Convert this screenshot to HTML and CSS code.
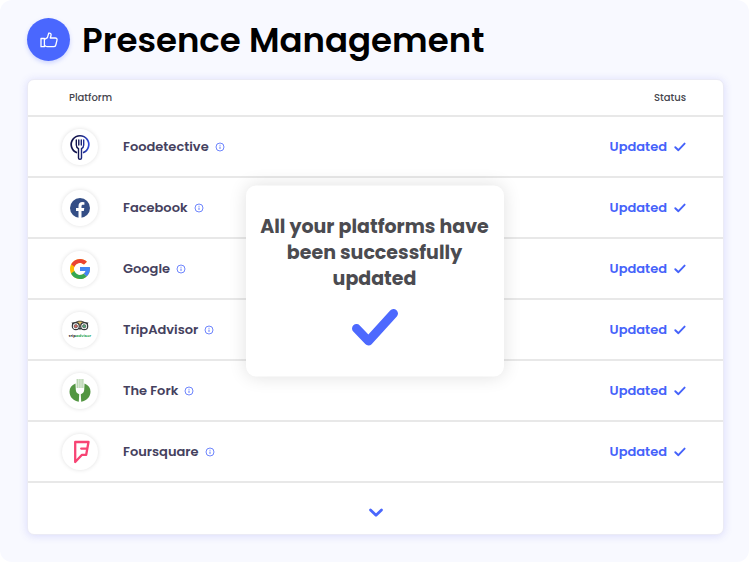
FILE: index.html
```html
<!DOCTYPE html>
<html lang="en">
<head>
<meta charset="utf-8">
<meta name="viewport" content="width=device-width, initial-scale=1">
<title>Presence Management</title>
<link rel="stylesheet" href="styles.css">
</head>
<body>
<svg class="defs" aria-hidden="true">
  <symbol id="info" viewBox="0 0 10 10"><circle cx="5" cy="5" r="4" fill="none" stroke="currentColor" stroke-width=".8"/><path d="M5 4.600v2.300M5 2.800v.9" fill="none" stroke="currentColor" stroke-width=".9"/></symbol>
  <symbol id="check" viewBox="0 0 46 38"><path d="M4.500 20 16.500 32.500 41.500 5" fill="none" stroke="currentColor" stroke-width="9" stroke-linecap="round" stroke-linejoin="round"/></symbol>
  <symbol id="tick" viewBox="0 0 12 10"><path d="M1.300 5.200 4.400 8.200 10.600 1.600" fill="none" stroke="currentColor" stroke-width="1.900" stroke-linecap="round" stroke-linejoin="round"/></symbol>
</svg>
<main class="page">
  <header class="heading">
    <span class="heading-icon">
      <svg width="20" height="20" viewBox="0 0 20 20" fill="none" stroke="currentColor" stroke-width="1.300" stroke-linejoin="round" aria-hidden="true"><path d="M2 8.500h3.400v8.200H2zM5.400 9.500 8.400 7.600 9.700 3.200c1.900-.5 2.700.9 2.300 2.300L11.300 8h4.900c1.500 0 2.100 1 1.800 2.200l-1.200 4.800c-.3 1.100-1.100 1.700-2.200 1.700H8.200c-1.500 0-1.900-1-2.800-1.200"/></svg>
    </span>
    <h1>Presence Management</h1>
  </header>
  <section class="card">
    <table>
      <thead><tr><th scope="col" class="platform-head">Platform</th><th scope="col" class="status-head">Status</th></tr></thead>
      <tbody>
        <tr>
          <td><div class="platform"><span class="logo"><svg width="24" height="28" viewBox="0 0 24 28" aria-hidden="true"><defs><linearGradient id="navy" gradientUnits="userSpaceOnUse" x1="2" x2="22" y1="0" y2="0"><stop offset=".4" stop-color="#11134d"/><stop offset="1" stop-color="#3450e8"/></linearGradient></defs><path d="M9 19.800A8.800 8.800 0 1 1 15 19.800" fill="none" stroke="url(#navy)" stroke-width="1.700"/><path d="M8.300 7v5c0 2 1 3 2.200 3.600V25c0 1.600 3 1.600 3 0v-9.400c1.200-.6 2.200-1.600 2.200-3.600V7M10.800 7v5M13.300 7v5" fill="none" stroke="url(#navy)" stroke-width="1.400" stroke-linecap="round"/></svg></span><span>Foodetective</span><button type="button" class="info" aria-label="About Foodetective"><svg width="10" height="10"><use href="#info"/></svg></button></div></td>
          <td><div class="status">Updated<svg width="12" height="10"><use href="#tick"/></svg></div></td>
        </tr>
        <tr>
          <td><div class="platform"><span class="logo"><svg width="20" height="20" viewBox="0 0 20 20" aria-hidden="true"><circle cx="10" cy="10" r="10" fill="#344e86"/><path d="M8.500 20v-7H6v-3h2.500V7.900c0-2.600 1.500-3.900 3.800-3.900l2.100.2v2.500h-1.300c-1.200 0-1.600.7-1.600 1.500V10h2.800l-.5 3h-2.300v7z" fill="#fff"/></svg></span><span>Facebook</span><button type="button" class="info" aria-label="About Facebook"><svg width="10" height="10"><use href="#info"/></svg></button></div></td>
          <td><div class="status">Updated<svg width="12" height="10"><use href="#tick"/></svg></div></td>
        </tr>
        <tr>
          <td><div class="platform"><span class="logo"><svg width="20" height="20" viewBox="4 4 40 40" aria-hidden="true"><path fill="#fbbc05" d="M43.600 20H24v8h11.300C33.700 32.700 29.200 36 24 36c-6.600 0-12-5.400-12-12s5.400-12 12-12c3.100 0 5.800 1.200 8 3l5.700-5.700C34 6.100 29.300 4 24 4 13 4 4 13 4 24s9 20 20 20 20-9 20-20c0-1.300-.1-2.700-.4-4z"/><path fill="#ea4335" d="m6.300 14.700 6.600 4.800C14.700 15.100 19 12 24 12c3.100 0 5.800 1.200 8 3l5.700-5.700C34 6.100 29.300 4 24 4 16.300 4 9.700 8.300 6.300 14.700z"/><path fill="#34a853" d="M24 44c5.200 0 9.900-2 13.400-5.200l-6.200-5.200C29.200 35.100 26.700 36 24 36c-5.200 0-9.600-3.300-11.300-7.900l-6.500 5C9.500 39.600 16.200 44 24 44z"/><path fill="#4285f4" d="M43.600 20H24v8h11.300a12 12 0 0 1-4.100 5.600l6.200 5.200C37 39.200 44 34 44 24c0-1.300-.1-2.700-.4-4z"/></svg></span><span>Google</span><button type="button" class="info" aria-label="About Google"><svg width="10" height="10"><use href="#info"/></svg></button></div></td>
          <td><div class="status">Updated<svg width="12" height="10"><use href="#tick"/></svg></div></td>
        </tr>
        <tr>
          <td><div class="platform"><span class="logo"><svg width="28" height="20" viewBox="-1 0 28 20" aria-hidden="true"><path d="M4.500 2.500h3C11 .3 15 .3 18.500 2.500h3l-1.300 2.300H5.800z" fill="#34383a"/><path d="M9.300 2.200C11.500 1.300 14.500 1.300 16.700 2.200L13 6z" fill="#e7c568"/><circle cx="8.800" cy="6.200" r="3.500" fill="#fff" stroke="#34383a" stroke-width="1.200"/><circle cx="17.200" cy="6.200" r="3.500" fill="#fff" stroke="#34383a" stroke-width="1.200"/><circle cx="8.800" cy="6.200" r="1.700" fill="#d66a62" stroke="#555" stroke-width=".7"/><circle cx="17.200" cy="6.200" r="1.700" fill="#55a878" stroke="#555" stroke-width=".7"/><path d="m11.500 8 1.500 2.300L14.500 8z" fill="#34383a"/><text x="13" y="16.500" text-anchor="middle" class="owl-word"><tspan fill="#222">trip</tspan><tspan fill="#2aa653">advisor</tspan></text></svg></span><span>TripAdvisor</span><button type="button" class="info" aria-label="About TripAdvisor"><svg width="10" height="10"><use href="#info"/></svg></button></div></td>
          <td><div class="status">Updated<svg width="12" height="10"><use href="#tick"/></svg></div></td>
        </tr>
        <tr>
          <td><div class="platform"><span class="logo"><svg width="22" height="26" viewBox="0 0 22 26" aria-hidden="true"><path d="M6.500 5.500C2.500 7 .5 10 .5 13.800c0 5 3.800 9.200 9.300 9.900l.4-7.500c-2-.7-3.200-2-3.400-4.200zM15.500 5.500c4 1.500 6 4.500 6 8.300 0 5-3.800 9.200-9.300 9.900l-.4-7.500c2-.7 3.200-2 3.400-4.200z" fill="#539642"/><path d="M8.200 1v9M10.100 1v9M12 1v9M13.900 1v9" stroke="#8fbd82" stroke-width=".9"/></svg></span><span>The Fork</span><button type="button" class="info" aria-label="About The Fork"><svg width="10" height="10"><use href="#info"/></svg></button></div></td>
          <td><div class="status">Updated<svg width="12" height="10"><use href="#tick"/></svg></div></td>
        </tr>
        <tr>
          <td><div class="platform"><span class="logo"><svg width="20" height="24" viewBox="0 0 20 24" aria-hidden="true"><path d="M5.200 2h13.300L16.200 14.800h-4.200L5.200 22zM16.800 8.600h-5.600" fill="none" stroke="#f74474" stroke-width="2.300" stroke-linejoin="round" stroke-linecap="round"/></svg></span><span>Foursquare</span><button type="button" class="info" aria-label="About Foursquare"><svg width="10" height="10"><use href="#info"/></svg></button></div></td>
          <td><div class="status">Updated<svg width="12" height="10"><use href="#tick"/></svg></div></td>
        </tr>
      </tbody>
    </table>
    <button type="button" class="more" aria-label="Show more platforms"><svg width="16" height="10" viewBox="0 0 16 10" fill="none" stroke="currentColor" stroke-width="2.800" stroke-linecap="round" stroke-linejoin="round"><path d="m2.500 2 5.500 5.200L13.500 2"/></svg></button>
  </section>
  <div class="notice" role="dialog" aria-labelledby="notice-text">
    <p id="notice-text">All your platforms have been successfully updated</p>
    <svg width="46" height="38" aria-hidden="true"><use href="#check"/></svg>
  </div>
</main>
</body>
</html>
```

FILE: styles.css
```css
* { box-sizing: border-box; }

body {
  margin: 0;
  background: #fff;
  font-family: Poppins, Inter, "Open Sans", sans-serif;
  font-weight: 600;
}

svg { display: block; flex: none; }

.defs { position: absolute; width: 0; height: 0; }

button {
  padding: 0;
  border: 0;
  background: none;
  color: #4a67fc;
  cursor: pointer;
}

.page {
  position: relative;
  display: flex;
  flex-direction: column;
  gap: 18px;
  min-height: 100vh;
  padding: 18px 25px 27px 27px;
  border-radius: 12px;
  background: #f8f9ff;
}

.heading { display: flex; align-items: center; gap: 12px; }

.heading-icon {
  display: grid;
  place-items: center;
  width: 43px;
  height: 43px;
  border-radius: 50%;
  background: #4a67fe;
  color: #fff;
  box-shadow: 0 2px 4px #4a67fe40;
}

h1 {
  margin: 0;
  color: #000;
  font-size: 34px;
  font-weight: 600;
  line-height: 42px;
}

.card {
  display: flex;
  flex-direction: column;
  flex: 1;
  border: 1px solid #ebebf5;
  border-radius: 7px;
  background: #fff;
  box-shadow: 0 1px 8px #5a5af030;
}

table { width: 100%; border-spacing: 0; }

th, td { padding: 0; border-bottom: 2px solid #e8e8e8; }

th {
  height: 37px;
  color: #45454c;
  font-size: 10px;
  font-weight: 500;
}

td { height: 61px; }

.platform-head { padding-left: 41px; text-align: left; }
.status-head { padding-right: 37px; text-align: right; }

.platform {
  display: flex;
  align-items: center;
  padding-left: 34px;
  color: #45415e;
  font-size: 13px;
}

.logo {
  display: grid;
  place-items: center;
  width: 36px;
  height: 36px;
  margin-right: 25px;
  border-radius: 50%;
  background: #fff;
  box-shadow: 0 0 4px #00000020;
}

.owl-word { font-size: 4px; }

.info { margin-left: 6px; }

.status {
  display: flex;
  align-items: center;
  justify-content: flex-end;
  gap: 7px;
  padding-right: 37px;
  color: #4562fa;
  font-size: 13px;
}

.more {
  display: grid;
  flex: 1;
  place-items: center;
  padding-top: 8px;
}

.notice {
  position: absolute;
  top: 50%;
  left: 50%;
  display: flex;
  flex-direction: column;
  align-items: center;
  gap: 17px;
  width: 258px;
  padding: 28px 8px 30px;
  border-radius: 10px;
  background: #fff;
  box-shadow: 0 0 18px #0000001f;
  transform: translate(-50%, -50%);
}

.notice p {
  margin: 0;
  color: #4b4b50;
  font-size: 19px;
  font-weight: 700;
  line-height: 26px;
  text-align: center;
}

.notice svg { color: #4d69fe; }
```
